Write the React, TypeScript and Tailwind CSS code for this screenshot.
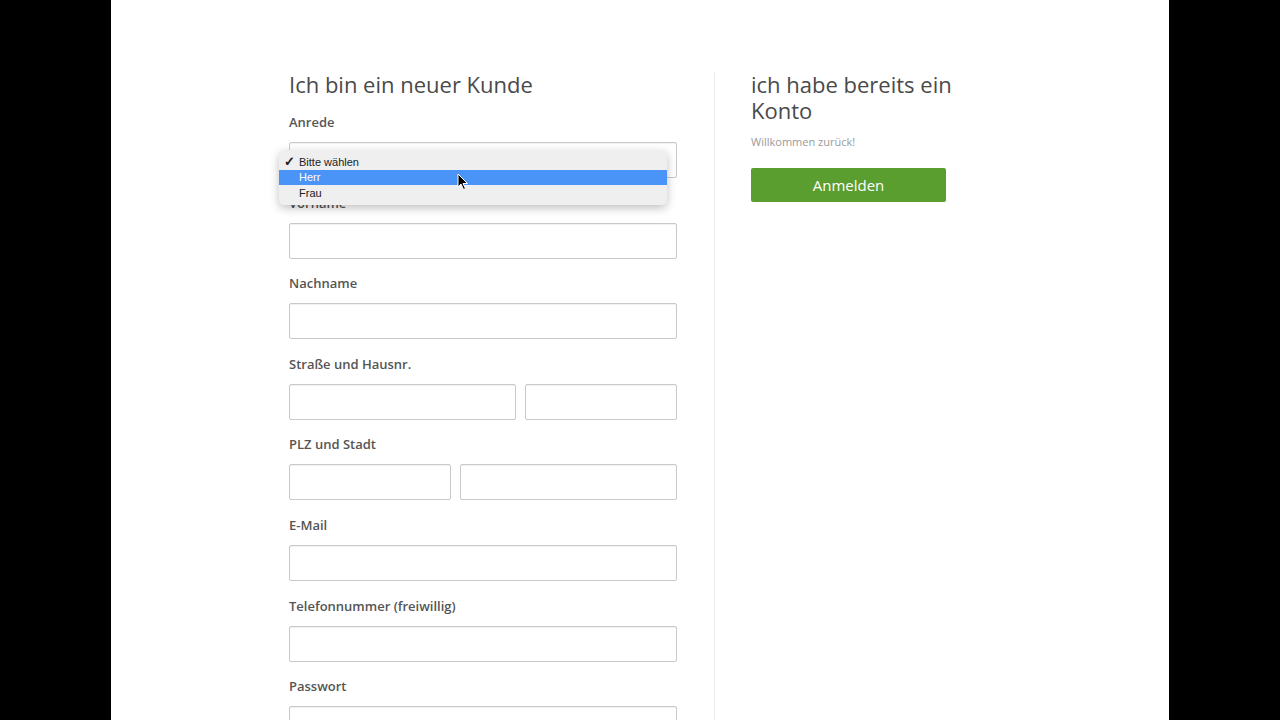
import React from "react";

const font = { fontFamily: '"Open Sans", "Noto Sans", sans-serif' };

function Field({ label, children }: { label: string; children: React.ReactNode }) {
  return (
    <div className="flex flex-col mb-[14.6px]">
      <div className="h-5 leading-5 text-[13px] font-semibold text-[#555]">{label}</div>
      <div className="mt-2.5 flex gap-[9px]">{children}</div>
    </div>
  );
}

function Input({ w }: { w?: string }) {
  return <div className={`h-9 border border-[#c9c9c9] rounded-[2px] bg-white shadow-[inset_0_1px_1px_rgba(0,0,0,0.06)] ${w ?? "flex-1"}`} />;
}

export default function App() {
  return (
    <div className="w-[1280px] h-[720px] bg-black flex overflow-hidden" style={font}>
      <div className="ml-[111px] w-[1058px] h-full bg-white flex pl-[178px] pt-[72px]">
        <div className="w-[388px] flex flex-col">
          <h1 className="text-[22px] leading-[26px] text-[#4a4a4a] font-normal mb-[15px] -mt-px">Ich bin ein neuer Kunde</h1>
          <div className="relative">
            <Field label="Anrede">
              <Input />
            </Field>
            <div className="absolute left-[-10px] top-[38px] w-[388px] h-[55px] bg-[#efefef] rounded-[5px] shadow-[0_3px_10px_rgba(0,0,0,0.25)] pt-[4px] text-[11px] text-[#222]" style={{ fontFamily: '"Liberation Sans", Arial, sans-serif' }}>
              <div className="h-4 leading-4 flex items-center">
                <span className="w-5 text-center text-[13px] font-bold">✓</span>
                <span>Bitte wählen</span>
              </div>
              <div className="h-[15px] leading-[15px] flex items-center bg-[#4a94f7] text-white">
                <span className="w-5" />
                <span>Herr</span>
              </div>
              <div className="h-4 leading-4 flex items-center">
                <span className="w-5" />
                <span>Frau</span>
              </div>
            </div>
            <svg className="absolute left-[168px] top-[61px]" width="12" height="18" viewBox="0 0 12 18">
              <path d="M1 1 L1 14 L4 11 L6.5 16.5 L8.5 15.5 L6 10.5 L10.5 10.5 Z" fill="#000" stroke="#fff" strokeWidth="1" strokeLinejoin="round" />
            </svg>
          </div>
          <Field label="Vorname"><Input /></Field>
          <Field label="Nachname"><Input /></Field>
          <Field label="Straße und Hausnr."><Input w="w-[227px]" /><Input /></Field>
          <Field label="PLZ und Stadt"><Input w="w-[162px]" /><Input /></Field>
          <Field label="E-Mail"><Input /></Field>
          <Field label="Telefonnummer (freiwillig)"><Input /></Field>
          <Field label="Passwort"><Input /></Field>
        </div>
        <div className="ml-[37px] w-px bg-[#ececec] self-stretch" />
        <div className="ml-[36px] w-[240px] flex flex-col">
          <h2 className="text-[22px] leading-[26px] text-[#4a4a4a] font-normal -mt-px">ich habe bereits ein Konto</h2>
          <div className="mt-[12px] text-[11px] leading-[14px] text-[#9a9a9a]">Willkommen zurück!</div>
          <button className="mt-[19px] w-[195px] h-[34px] bg-[#5a9e2f] rounded-[2px] text-white text-[15px]">Anmelden</button>
        </div>
      </div>
    </div>
  );
}
